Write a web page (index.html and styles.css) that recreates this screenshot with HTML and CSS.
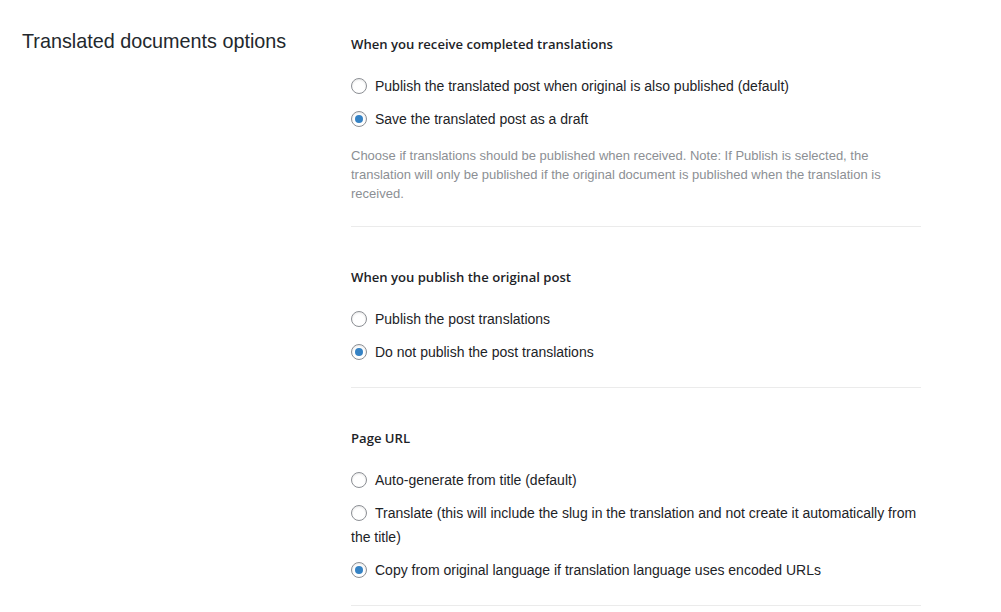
FILE: index.html
```html
<!DOCTYPE html>
<html>
<head>
    <title>Translated documents options</title>
    <link rel="stylesheet" href="styles.css">
</head>
<body>
    <div class="page">
        <div class="side">
            <h2>Translated documents options</h2>
        </div>

        <div class="content">
            <div class="section">
                <h4>When you receive completed translations</h4>
                <div class="options">
                    <label class="option"><input type="radio" name="completed" value="publish">Publish the translated post when original is also published (default)</label>
                    <label class="option"><input type="radio" name="completed" value="draft" checked>Save the translated post as a draft</label>
                </div>
                <p class="description">Choose if translations should be published when received. Note: If Publish is selected, the translation will only be published if the original document is published when the translation is received.</p>
            </div>

            <div class="section">
                <h4>When you publish the original post</h4>
                <div class="options">
                    <label class="option"><input type="radio" name="original" value="publish">Publish the post translations</label>
                    <label class="option"><input type="radio" name="original" value="none" checked>Do not publish the post translations</label>
                </div>
            </div>

            <div class="section">
                <h4>Page URL</h4>
                <div class="options">
                    <label class="option"><input type="radio" name="slug" value="auto">Auto-generate from title (default)</label>
                    <label class="option"><input type="radio" name="slug" value="translate">Translate (this will include the slug in the translation and not create it automatically from the title)</label>
                    <label class="option"><input type="radio" name="slug" value="copy" checked>Copy from original language if translation language uses encoded URLs</label>
                </div>
            </div>
        </div>
    </div>
</body>
</html>
```
FILE: styles.css
```css
body {
    font-family: "Liberation Sans", Arial, sans-serif;
    font-size: 14px;
    color: #1d2327;
    background: #fff;
    margin: 0;
}
.page {
    display: flex;
    padding: 28px 0 0 22px;
}
.side {
    width: 329px;
    flex-shrink: 0;
}
.side h2 {
    margin: 0;
    font-size: 19.8px;
    font-weight: normal;
    line-height: 26px;
    color: #23282d;
}
.content {
    width: 570px;
    padding-top: 6px;
}
.section {
    padding: 40px 0 23px;
    border-bottom: 1px solid #ebebeb;
}
.section:first-child {
    padding-top: 0;
}
.section h4 {
    margin: 0 0 20px;
    font-family: "Open Sans", "Liberation Sans", sans-serif;
    font-size: 13.1px;
    font-weight: 600;
    line-height: 20px;
}
.options {
    display: flex;
    flex-direction: column;
    gap: 9px;
}
.option {
    display: block;
    line-height: 24px;
    cursor: pointer;
}
.option input {
    appearance: none;
    -webkit-appearance: none;
    box-sizing: border-box;
    width: 16px;
    height: 16px;
    margin: 4px 8px 4px 0;
    vertical-align: top;
    border: 1px solid #8c8f94;
    border-radius: 50%;
    background: #fff;
    box-shadow: inset 0 1px 2px rgba(0, 0, 0, 0.1);
    position: relative;
}
.option input:checked::before {
    content: "";
    position: absolute;
    top: 3px;
    left: 3px;
    width: 8px;
    height: 8px;
    border-radius: 50%;
    background: #3582c4;
}
.description {
    margin: 15px 0 0;
    font-size: 13px;
    line-height: 19px;
    color: #8c8f94;
}
```
